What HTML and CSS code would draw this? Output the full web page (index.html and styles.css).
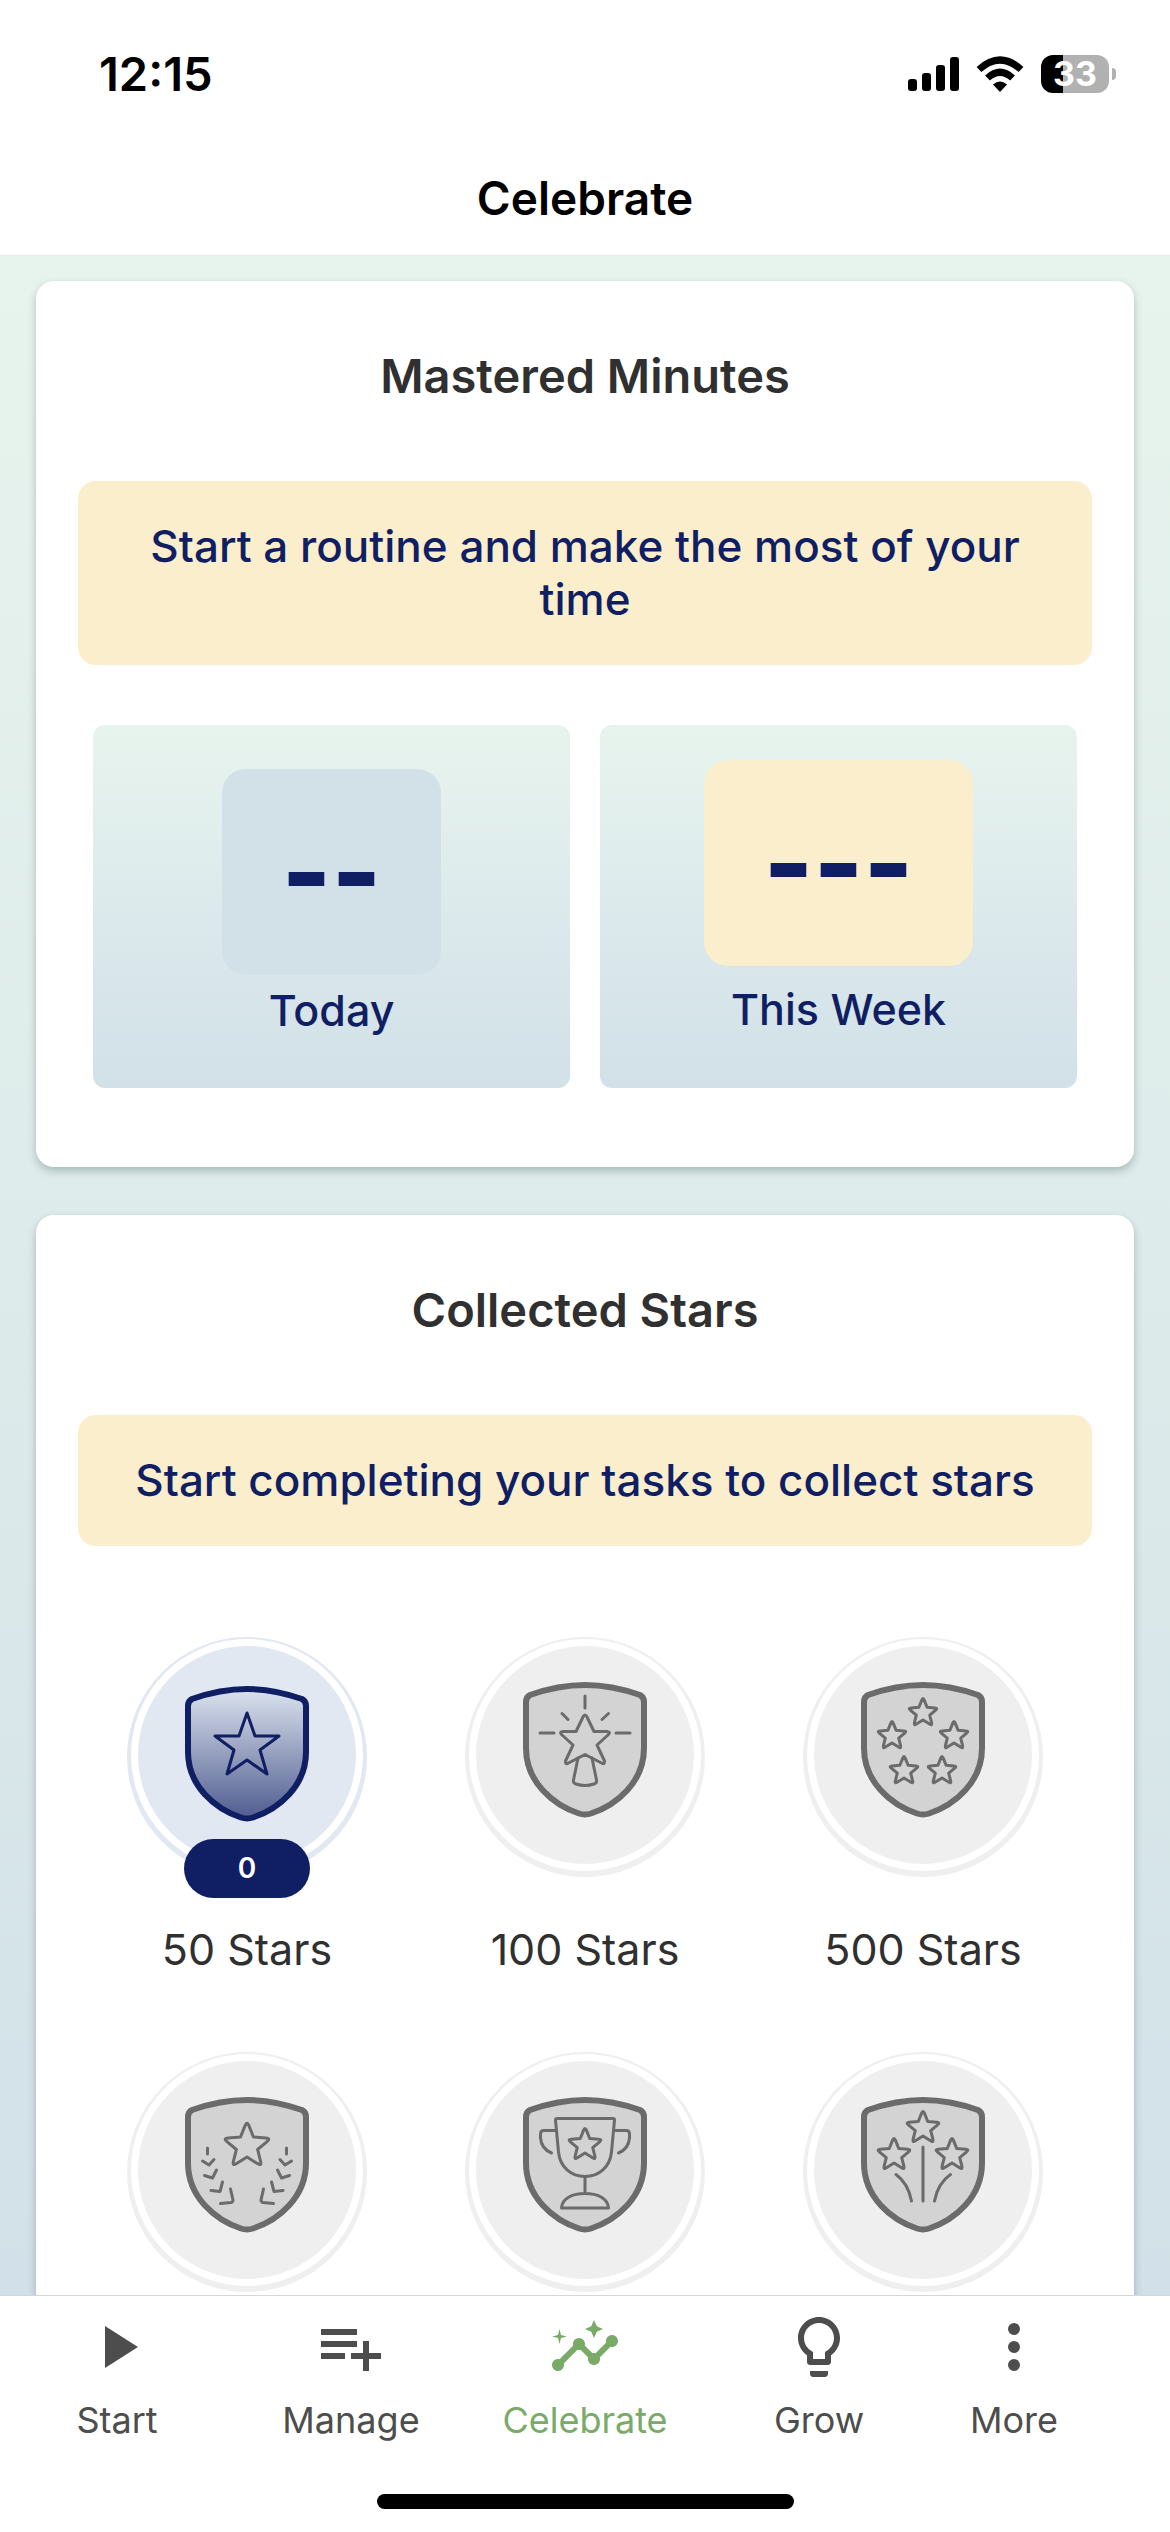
FILE: index.html
```
<!DOCTYPE html>
<html lang="en">
<head>
  <meta charset="UTF-8" />
  <meta name="viewport" content="width=device-width, initial-scale=1.0"/>
  <title>Celebrate</title>
  <link rel="stylesheet" href="styles.css">
</head>
<body>
  <!-- Shared shapes -->
  <svg class="defs" aria-hidden="true">
    <defs>
      <linearGradient id="shieldFill" x1="0" y1="0" x2="0" y2="1">
        <stop offset="0" stop-color="#dbe3ee"/>
        <stop offset="1" stop-color="#4f5c8f"/>
      </linearGradient>
      <path id="shield" d="M62 3C42 3 24 7 7 13Q3 15 3 20V66C3 100 30 123 56 131.500Q62 133.500 68 131.500C94 123 121 100 121 66V20Q121 15 117 13C100 7 82 3 62 3Z"/>
      <path id="star" vector-effect="non-scaling-stroke" d="M-1.200-12.900Q0-16 1.200-12.900L4.100-5.700 11.900-5.100Q15.200-4.900 12.700-2.800L6.700 2.200 8.600 9.700Q9.400 12.900 6.600 11.100L0 7-6.600 11.100Q-9.400 12.900-8.600 9.700L-6.700 2.200-12.700-2.800Q-15.200-4.900-11.900-5.100L-4.100-5.700Z"/>
      <path id="laurel" d="M22.500 51V57M17.500 64L24 68 29 62.500M19.500 78.500L27.500 81 31.500 73M26 93.500L35 94.500 37.500 85M35.500 106.500L46 105.500Q48 105 48 103L45.500 92"/>
      <path id="handle" d="M33 33.500H21Q17.500 33.500 17.500 37V41Q18.500 52 28.500 56"/>
    </defs>
  </svg>

  <header class="top">
    <div class="status-bar">
      <span class="time">12:15</span>
      <div class="status-icons">
        <svg width="51" height="34" viewBox="0 0 51 34" aria-hidden="true">
          <rect x="0" y="22" width="9" height="12" rx="3"/>
          <rect x="14" y="16" width="9" height="18" rx="3"/>
          <rect x="28" y="8" width="9" height="26" rx="3"/>
          <rect x="42" y="0" width="9" height="34" rx="3"/>
        </svg>
        <svg width="48" height="36" viewBox="0 0 48 36" aria-hidden="true">
          <path d="M24 36l-7-7.500q7-6 14 0z"/>
          <path d="M3 13.500Q24-5.500 45 13.500M11.500 22Q24 10.500 36.500 22" fill="none" stroke="#000" stroke-width="7"/>
        </svg>
        <div class="battery-wrap">
          <span class="battery">33</span>
          <span class="battery-cap"></span>
        </div>
      </div>
    </div>
    <h1>Celebrate</h1>
  </header>

  <main>
    <section class="card">
      <h2>Mastered Minutes</h2>
      <p class="banner">Start a routine and make the most of your time</p>
      <div class="minutes">
        <div class="tile today">
          <div class="value">--</div>
          <div class="tile-label">Today</div>
        </div>
        <div class="tile week">
          <div class="value">---</div>
          <div class="tile-label">This Week</div>
        </div>
      </div>
    </section>

    <section class="card">
      <h2>Collected Stars</h2>
      <p class="banner">Start completing your tasks to collect stars</p>
      <div class="badges">
        <div class="badge active">
          <div class="circle">
            <svg class="shield" viewBox="0 0 124 136" aria-hidden="true">
              <use href="#shield" class="outline"/>
              <path d="M62 27L70 50H94L75 64 82 88 62 74 42 88 49 64 30 50H54Z"/>
            </svg>
            <span class="count">0</span>
          </div>
          <p>50 Stars</p>
        </div>

        <div class="badge">
          <div class="circle">
            <svg class="shield" viewBox="0 0 124 136" aria-hidden="true">
              <use href="#shield" class="outline"/>
              <path d="M60 35Q62 31 64 35L71 49.500H84Q88 50 85.500 52.500L74 63 81.500 79Q82 83 78.500 81L62 72.500 45.500 81Q42 83 42.500 79L50 63 38.500 52.500Q36 50 40 49.500H53Z"/>
              <path d="M55 76L50.500 98Q50 101 53 102 62 105 71 102 74 101 73.500 98L69 76"/>
              <path d="M62 14V26M39 31.500L45 37.500M85.500 31.500L79 37.500M17 51H31M93 51H107"/>
            </svg>
          </div>
          <p>100 Stars</p>
        </div>

        <div class="badge">
          <div class="circle">
            <svg class="shield" viewBox="0 0 124 136" aria-hidden="true">
              <use href="#shield" class="outline"/>
              <use href="#star" transform="translate(62 31)"/>
              <use href="#star" transform="translate(31 54)"/>
              <use href="#star" transform="translate(93 54)"/>
              <use href="#star" transform="translate(43 89)"/>
              <use href="#star" transform="translate(81 89)"/>
            </svg>
          </div>
          <p>500 Stars</p>
        </div>

        <div class="badge">
          <div class="circle">
            <svg class="shield" viewBox="0 0 124 136" aria-hidden="true">
              <use href="#shield" class="outline"/>
              <use href="#star" transform="translate(62 49) scale(1.58)"/>
              <use href="#laurel"/>
              <use href="#laurel" transform="translate(124) scale(-1 1)"/>
            </svg>
          </div>
        </div>

        <div class="badge">
          <div class="circle">
            <svg class="shield" viewBox="0 0 124 136" aria-hidden="true">
              <use href="#shield" class="outline"/>
              <path d="M34 21.500H90Q91.500 21.500 91.500 23L88.500 55C87 70 76 79.500 62 79.500S37 70 35.500 55L32.500 23Q32.500 21.500 34 21.500Z"/>
              <path d="M62 79.500V96M38.500 111H85.500C85 101 74 96.500 62 96.500S39 101 38.500 111Z"/>
              <use href="#handle"/>
              <use href="#handle" transform="translate(124) scale(-1 1)"/>
              <use href="#star" transform="translate(62 48) scale(1.15)"/>
            </svg>
          </div>
        </div>

        <div class="badge">
          <div class="circle">
            <svg class="shield" viewBox="0 0 124 136" aria-hidden="true">
              <use href="#shield" class="outline"/>
              <use href="#star" transform="translate(62 31) scale(1.15)"/>
              <use href="#star" transform="translate(33 58) scale(1.15)"/>
              <use href="#star" transform="translate(91 58) scale(1.15)"/>
              <path d="M62 50V104M35 77.500Q47 86 50.500 104M89.500 77.500Q77 86 73.500 104"/>
            </svg>
          </div>
        </div>
      </div>
    </section>
  </main>

  <nav class="tab-bar">
    <div class="tabs">
      <a href="#start">
        <svg viewBox="0 0 24 24" aria-hidden="true"><path d="M8 5v14l11-7z"/></svg>
        Start
      </a>
      <a href="#manage">
        <svg viewBox="0 0 24 24" aria-hidden="true"><path d="M14 10H2v2h12v-2zm0-4H2v2h12V6zm4 8v-4h-2v4h-4v2h4v4h2v-4h4v-2h-4zM2 16h8v-2H2v2z"/></svg>
        Manage
      </a>
      <a href="#celebrate" class="current" aria-current="page">
        <svg viewBox="0 0 24 24" aria-hidden="true">
          <path d="M21 8c-1.450 0-2.260 1.440-1.930 2.510l-3.550 3.560c-.3-.09-.74-.09-1.040 0l-2.550-2.550C12.270 10.450 11.460 9 10 9c-1.450 0-2.270 1.440-1.930 2.520l-4.560 4.550C2.440 15.740 1 16.550 1 18c0 1.100.9 2 2 2 1.450 0 2.260-1.440 1.930-2.510l4.550-4.560c.3.09.74.09 1.040 0l2.550 2.550C12.730 16.550 13.540 18 15 18c1.450 0 2.270-1.440 1.930-2.520l3.560-3.550c1.070.33 2.510-.48 2.510-1.930 0-1.100-.9-2-2-2z"/>
          <path d="M15 9l.94-2.070L18 6l-2.060-.93L15 3l-.92 2.070L12 6l2.080.93zM3.500 11L4 9l2-.5L4 8l-.5-2L3 8l-2 .5L3 9z"/>
        </svg>
        Celebrate
      </a>
      <a href="#grow">
        <svg viewBox="0 0 24 24" aria-hidden="true"><path d="M9 21c0 .55.45 1 1 1h4c.55 0 1-.45 1-1v-1H9v1zm3-19C8.140 2 5 5.140 5 9c0 2.380 1.190 4.470 3 5.740V17c0 .55.45 1 1 1h6c.55 0 1-.45 1-1v-2.260c1.810-1.270 3-3.360 3-5.740 0-3.860-3.140-7-7-7zm2.850 11.100l-.85.6V16h-4v-2.300l-.85-.6C7.800 12.160 7 10.630 7 9c0-2.760 2.240-5 5-5s5 2.240 5 5c0 1.630-.8 3.160-2.150 4.100z"/></svg>
        Grow
      </a>
      <a href="#more" class="more">
        <svg viewBox="0 0 24 24" aria-hidden="true"><circle cx="12" cy="6" r="2"/><circle cx="12" cy="12" r="2"/><circle cx="12" cy="18" r="2"/></svg>
        More
      </a>
    </div>
    <div class="home-indicator"></div>
  </nav>
</body>
</html>
```
FILE: styles.css
```
* {
  margin: 0;
  padding: 0;
  box-sizing: border-box;
}

body {
  height: 100vh;
  display: flex;
  flex-direction: column;
  font-family: 'Inter', 'Liberation Sans', sans-serif;
  background: #fff;
  color: #303030;
  overflow: hidden;
}

.defs {
  position: absolute;
  width: 0;
  height: 0;
}

/* Header */
.top {
  color: #000;
  padding-bottom: 27px;
  border-bottom: 1px solid #e6ebe9;
}

.status-bar {
  display: flex;
  justify-content: space-between;
  align-items: center;
  padding: 44px 54px 0 99px;
}

.time {
  font-size: 47px;
  line-height: 60px;
  font-weight: 600;
}

.status-icons {
  display: flex;
  align-items: center;
  gap: 17px;
}

.battery-wrap {
  display: flex;
  align-items: center;
  gap: 3px;
}

.battery {
  width: 68px;
  height: 38px;
  border-radius: 12px;
  background: linear-gradient(90deg, #000 22px, #b1b1b1 22px);
  color: #fff;
  font-size: 34px;
  line-height: 38px;
  font-weight: 700;
  text-align: center;
}

.battery-cap {
  width: 4px;
  height: 12px;
  border-radius: 0 4px 4px 0;
  background: #b1b1b1;
}

h1 {
  margin-top: 64px;
  font-size: 46px;
  line-height: 60px;
  font-weight: 600;
  text-align: center;
}

/* Cards */
main {
  flex: 1;
  min-height: 0;
  overflow-y: auto;
  scrollbar-width: none;
  display: flex;
  flex-direction: column;
  gap: 48px;
  padding: 25px 36px;
  background: linear-gradient(#e7f4ed, #dbe9ea 60%, #d2e1e9);
}

.card {
  flex-shrink: 0;
  padding: 65px 42px 79px;
  background: #fff;
  border-radius: 18px;
  box-shadow: 0 4px 8px rgba(0, 40, 30, 0.25);
}

h2 {
  font-size: 47px;
  line-height: 60px;
  font-weight: 600;
  text-align: center;
}

.banner {
  margin-top: 75px;
  padding: 39px 36px;
  background: #fbeecc;
  border-radius: 18px;
  color: #101f63;
  font-size: 44px;
  line-height: 53px;
  font-weight: 500;
  text-align: center;
}

.minutes {
  display: grid;
  grid-template-columns: 1fr 1fr;
  gap: 30px;
  margin-top: 60px;
  padding: 0 15px;
}

.tile {
  display: flex;
  flex-direction: column;
  align-items: center;
  padding-bottom: 52px;
  border-radius: 12px;
  background: linear-gradient(#e7f4ed, #dae8ec 60%, #d2e1e8);
  color: #101f63;
}

.today {
  padding-top: 44px;
  gap: 9px;
}

.week {
  padding-top: 35px;
  gap: 17px;
}

.value {
  padding: 0 60px;
  border-radius: 24px;
  background: #d2e1e8;
  font-size: 106px;
  line-height: 206px;
  font-weight: 800;
}

.week .value {
  background: #fbeecc;
}

.tile-label {
  font-size: 43px;
  line-height: 52px;
  font-weight: 500;
}

/* Star badges */
.badges {
  display: grid;
  grid-template-columns: repeat(3, 1fr);
  row-gap: 79px;
  margin-top: 93px;
}

.badge {
  display: flex;
  flex-direction: column;
  align-items: center;
  gap: 52px;
}

.badge p {
  font-size: 43px;
  line-height: 52px;
}

.circle {
  position: relative;
  width: 232px;
  height: 232px;
  padding-top: 36px;
  border: 7px solid #fff;
  border-radius: 50%;
  background: #efefef;
  box-shadow: 0 2px 0 4px #efefef;
}

.shield {
  display: block;
  width: 124px;
  height: 136px;
  margin: 0 auto;
  fill: none;
  stroke: #6b6b6b;
  stroke-width: 3;
  stroke-linecap: round;
  stroke-linejoin: round;
}

.outline {
  fill: #d3d3d3;
  stroke-width: 6;
}

.active .circle {
  padding-top: 40px;
  background: #e1e8f2;
  box-shadow: 0 2px 0 4px #e1e8f2;
}

.active .shield {
  stroke: #101f63;
}

.active .outline {
  fill: url(#shieldFill);
}

.count {
  position: absolute;
  left: 50%;
  bottom: -34px;
  width: 126px;
  margin-left: -63px;
  border-radius: 30px;
  background: #101f63;
  color: #fff;
  font-size: 28px;
  line-height: 59px;
  font-weight: 600;
  text-align: center;
}

/* Bottom navigation */
.tab-bar {
  padding-bottom: 23px;
  border-top: 1px solid #d3d7d6;
}

.tabs {
  display: grid;
  grid-template-columns: repeat(5, 1fr);
  padding-top: 15px;
}

.tabs a {
  display: flex;
  flex-direction: column;
  align-items: center;
  gap: 15px;
  color: #4d4d4d;
  font-size: 36px;
  line-height: 44px;
  text-decoration: none;
}

.tabs svg {
  width: 72px;
  height: 72px;
  fill: currentColor;
}

.tabs .current {
  color: #79aa68;
}

.tabs .more {
  padding-right: 78px;
}

.home-indicator {
  width: 417px;
  height: 15px;
  margin: 52px auto 0;
  border-radius: 8px;
  background: #000;
}
```
